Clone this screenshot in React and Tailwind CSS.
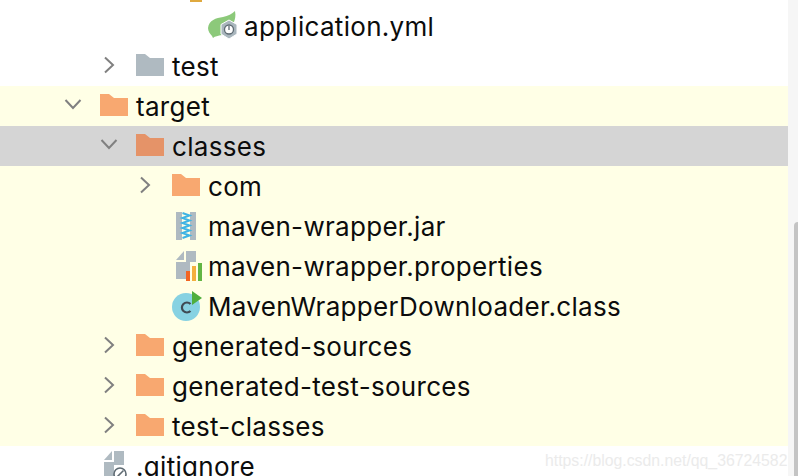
import React from 'react';

const ORANGE = '#f8a870';

const Folder = ({ color = ORANGE }) => (
  <svg width="28" height="22" viewBox="0 0 28 22" className="mb-[2px] block">
    <path d="M0 0H9L14 4H28V22H0Z" fill={color} />
  </svg>
);

const SpringIcon = () => (
  <svg width="32" height="30" viewBox="0 0 32 30" className="block">
    <path d="M0 17C1 9 8 7 15 6C20 5 24 3 27 0C28 5 27 8 26 11L14 24C10 25 7 25 5 27L4 25C2 23 0 20 0 17Z" fill="#8cc97a" />
    <path d="M21 9L29 13.5V23L21 28L13 23V13.5Z" fill="#a9b6bd" stroke="#ffffff" strokeWidth="1" />
    <circle cx="21" cy="18.5" r="4.5" fill="#ffffff" stroke="#5f6b73" strokeWidth="1.3" />
    <path d="M21 15V19" stroke="#5f6b73" strokeWidth="1.3" />
  </svg>
);

const JarIcon = () => (
  <svg width="20" height="28" viewBox="0 0 20 28" className="block">
    <path d="M0 0H20V28H0Z" fill="#afbac1" />
    <path d="M6 0H14V28H6Z" fill="#ffffe6" />
    <path d="M6.5 1L13.5 3.5L6.5 6L13.5 8.5L6.5 11L13.5 13.5L6.5 16L13.5 18.5L6.5 21L13.5 23.5L6.5 26" fill="none" stroke="#3fb4e4" strokeWidth="2" />
  </svg>
);

const PropsIcon = () => (
  <svg width="26" height="30" viewBox="0 0 26 30" className="block">
    <path d="M0 9L8 0V9Z" fill="#afbac1" />
    <path d="M10 0H20V11H14V28H0V11H10Z" fill="#afbac1" />
    <rect x="10" y="20" width="4" height="10" fill="#f26522" />
    <rect x="16" y="15" width="4" height="15" fill="#f4af3d" />
    <rect x="22" y="12" width="4" height="18" fill="#62b543" />
  </svg>
);

const ClassIcon = () => (
  <svg width="30" height="30" viewBox="0 0 30 30" className="block">
    <circle cx="14" cy="16" r="14" fill="#87d2e2" />
    <path d="M18.5 13A5 5 0 1 0 18.5 20" fill="none" stroke="#3f4b54" strokeWidth="2.2" />
    <path d="M20 0L30 7L20 14Z" fill="#4fae3c" />
  </svg>
);

const IgnoreIcon = () => (
  <svg width="24" height="30" viewBox="0 0 24 30" className="block">
    <path d="M0 9L8 0V9Z" fill="#afbac1" />
    <path d="M10 0H20V14H10V30H0V11H10Z" fill="#afbac1" />
    <circle cx="16" cy="23" r="6" fill="#ffffff" stroke="#5f6b73" strokeWidth="1.6" />
    <path d="M12.5 26.5L19.5 19.5" stroke="#5f6b73" strokeWidth="1.6" />
  </svg>
);

const ArrowRight = () => (
  <svg width="12" height="18" viewBox="0 0 12 18" className="ml-[8px] mb-[2px] block">
    <path d="M2 1.5L10 9L2 16.5" fill="none" stroke="#808080" strokeWidth="2" />
  </svg>
);

const ArrowDown = () => (
  <svg width="18" height="12" viewBox="0 0 18 12" className="ml-[5px] mb-[4px] block">
    <path d="M1.5 2L9 10L16.5 2" fill="none" stroke="#808080" strokeWidth="2" />
  </svg>
);

const Row = ({ indent, arrow, icon, label, selected }) => (
  <div
    className={`flex h-10 items-center whitespace-nowrap text-[26px] tracking-[0.3px] text-[#0c0c0c] ${selected ? 'bg-[#d5d5d5]' : ''}`}
    style={{ paddingLeft: indent }}
  >
    <span className="flex w-[41px] shrink-0 items-center">
      {arrow === 'right' && <ArrowRight />}
      {arrow === 'down' && <ArrowDown />}
    </span>
    <span className="flex w-[36px] shrink-0 items-center">{icon}</span>
    <span>{label}</span>
  </div>
);

export default function App() {
  return (
    <div className="relative h-[476px] w-[798px] overflow-hidden bg-white font-['Inter',sans-serif]">
      <div className="mr-[10px]">
        <div className="h-[6px]">
          <div className="ml-[190px] h-[2px] w-3 bg-[#dfa93f]" />
        </div>
        <Row indent={167} icon={<SpringIcon />} label="application.yml" />
        <Row indent={95} arrow="right" icon={<Folder color="#afbac1" />} label="test" />
        <div className="bg-[#ffffe6]">
          <Row indent={59} arrow="down" icon={<Folder />} label="target" />
          <Row indent={95} arrow="down" icon={<Folder color="#e59368" />} label="classes" selected />
          <Row indent={131} arrow="right" icon={<Folder />} label="com" />
          <Row indent={131} icon={<div className="pl-[4px]"><JarIcon /></div>} label="maven-wrapper.jar" />
          <Row indent={131} icon={<div className="pl-[4px]"><PropsIcon /></div>} label="maven-wrapper.properties" />
          <Row indent={131} icon={<ClassIcon />} label="MavenWrapperDownloader.class" />
          <Row indent={95} arrow="right" icon={<Folder />} label="generated-sources" />
          <Row indent={95} arrow="right" icon={<Folder />} label="generated-test-sources" />
          <Row indent={95} arrow="right" icon={<Folder />} label="test-classes" />
        </div>
        <Row indent={59} icon={<div className="pl-[4px]"><IgnoreIcon /></div>} label=".gitignore" />
      </div>
      {/* scrollbar */}
      <div className="absolute bottom-0 right-0 top-0 w-[10px] bg-[#f6f6f6]">
        <div className="absolute bottom-0 right-0 top-[222px] w-[4px] rounded-tl-[4px] bg-[#c4c4c4]" />
      </div>
      {/* watermark */}
      <div className="absolute left-[545px] top-[449px] font-['Liberation_Sans',sans-serif] text-[15.8px] text-[#ebebeb]">
        https://blog.csdn.net/qq_36724582
      </div>
    </div>
  );
}
